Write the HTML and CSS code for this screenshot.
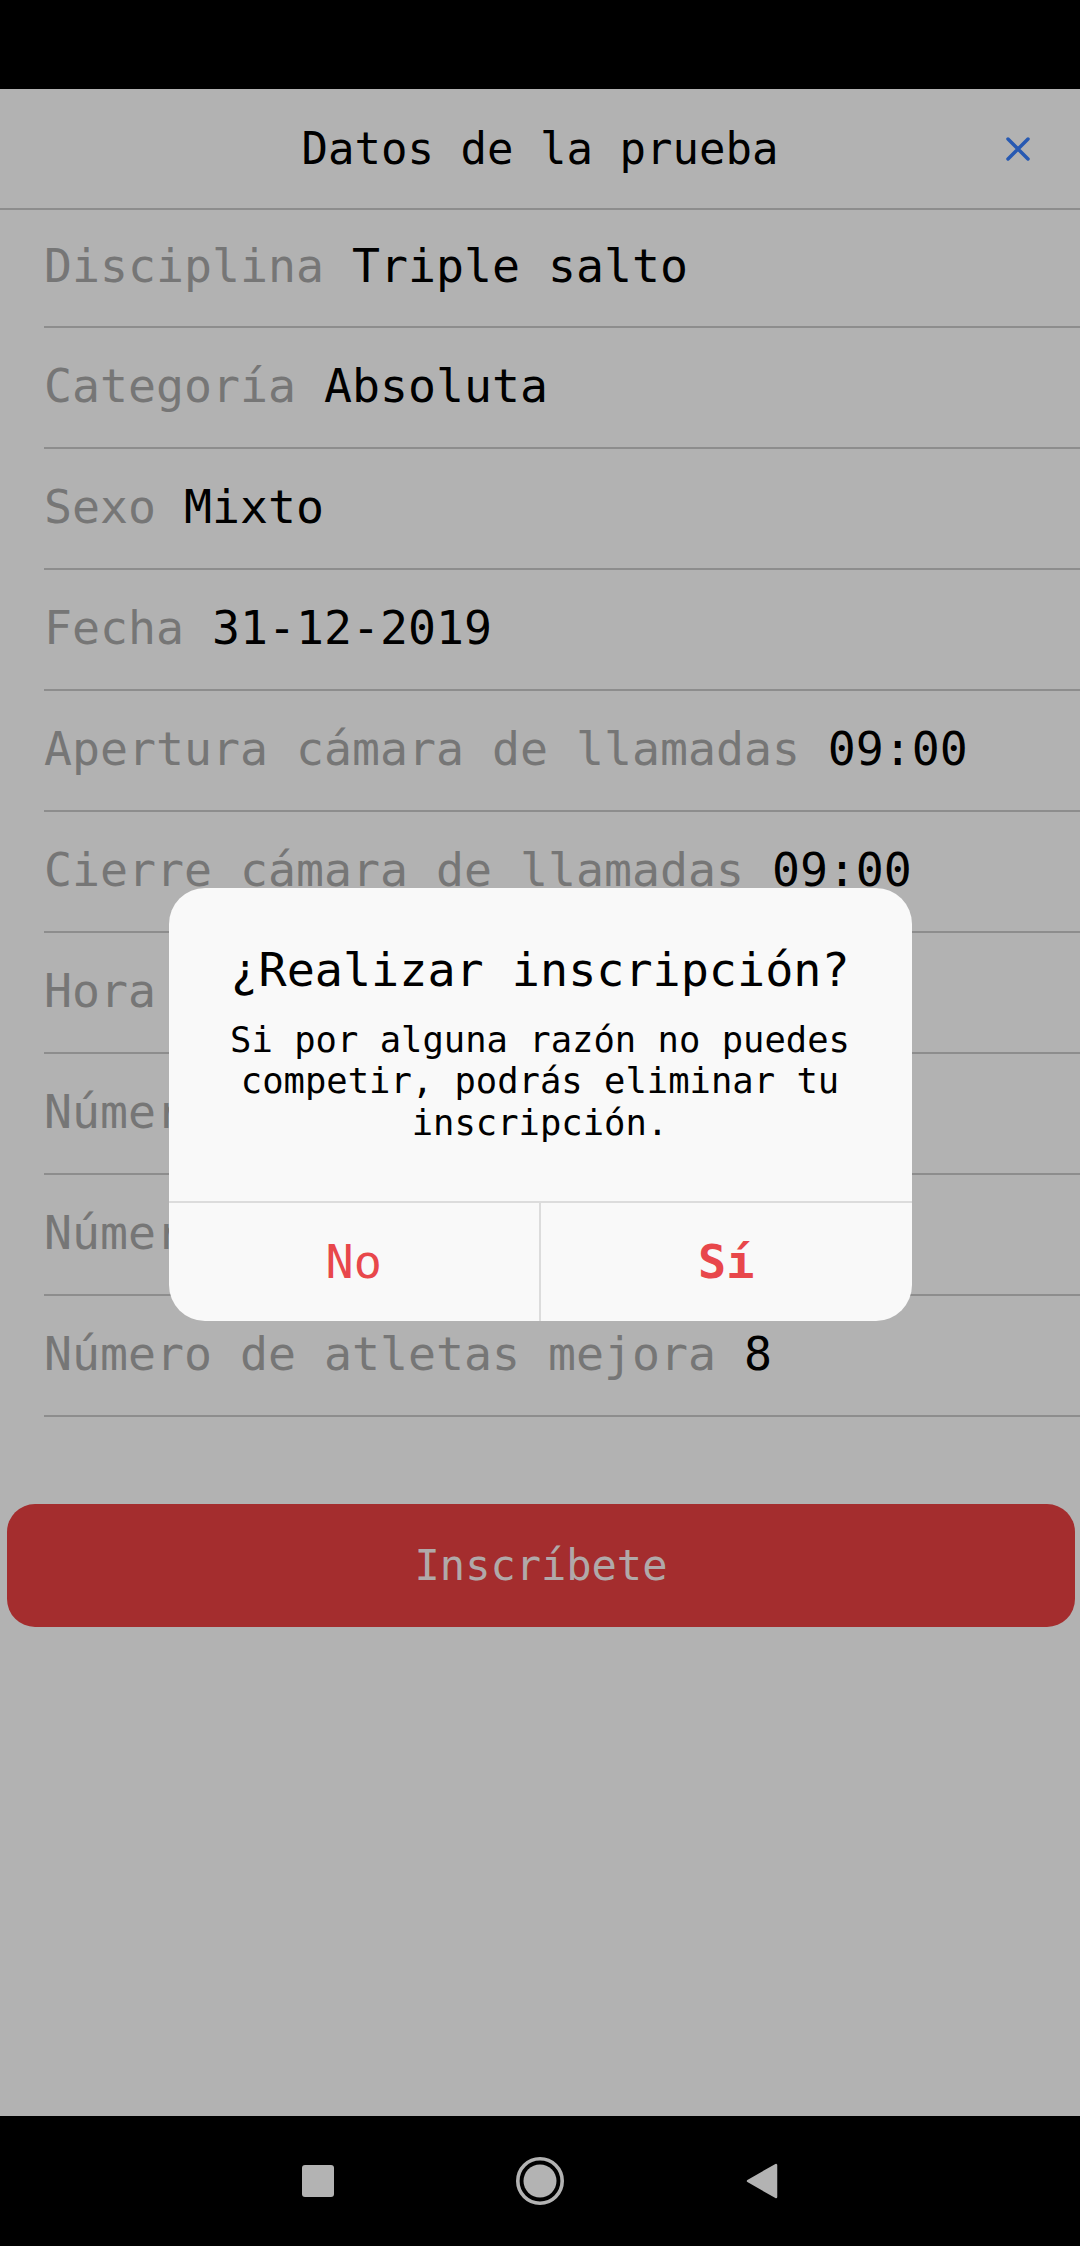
FILE: index.html
```html
<!DOCTYPE html>
<html lang="es">
<head>
<meta charset="utf-8">
<title>Datos de la prueba</title>
<link rel="stylesheet" href="styles.css">
</head>
<body>
<div class="status-bar"></div>
<div class="app">
  <header class="toolbar">
    <span class="toolbar-spacer"></span>
    <h1 class="toolbar-title">Datos de la prueba</h1>
    <button class="close-btn" aria-label="Cerrar">
      <svg width="24" height="24" viewBox="0 0 24 24"><path d="M2 2 L22 22 M22 2 L2 22" stroke="#3880ff" stroke-width="3.5" stroke-linecap="round" fill="none"/></svg>
    </button>
  </header>
  <ul class="details">
    <li class="detail"><span class="detail-text"><span class="detail-label">Disciplina</span> Triple salto</span></li>
    <li class="detail"><span class="detail-text"><span class="detail-label">Categoría</span> Absoluta</span></li>
    <li class="detail"><span class="detail-text"><span class="detail-label">Sexo</span> Mixto</span></li>
    <li class="detail"><span class="detail-text"><span class="detail-label">Fecha</span> 31-12-2019</span></li>
    <li class="detail"><span class="detail-text"><span class="detail-label">Apertura cámara de llamadas</span> 09:00</span></li>
    <li class="detail"><span class="detail-text"><span class="detail-label">Cierre cámara de llamadas</span> 09:00</span></li>
    <li class="detail"><span class="detail-text"><span class="detail-label">Hora</span> 09:30</span></li>
    <li class="detail"><span class="detail-text"><span class="detail-label">Número de intentos</span> 3</span></li>
    <li class="detail"><span class="detail-text"><span class="detail-label">Número de intentos mejora</span> 3</span></li>
    <li class="detail"><span class="detail-text"><span class="detail-label">Número de atletas mejora</span> 8</span></li>
  </ul>
  <div class="actions">
    <button class="primary-btn">Inscríbete</button>
  </div>
  <div class="backdrop">
    <div class="alert" role="dialog">
      <div class="alert-head"><h2 class="alert-title">¿Realizar inscripción?</h2></div>
      <p class="alert-message">Si por alguna razón no puedes competir, podrás eliminar tu inscripción.</p>
      <div class="alert-buttons">
        <button class="alert-btn">No</button>
        <button class="alert-btn alert-btn-strong">Sí</button>
      </div>
    </div>
  </div>
</div>
<nav class="nav-bar">
  <span class="nav-slot">
    <svg width="32" height="32" viewBox="0 0 32 32"><rect width="32" height="32" rx="3" fill="#b3b3b3"/></svg>
  </span>
  <span class="nav-slot">
    <svg width="48" height="48" viewBox="0 0 48 48"><circle cx="24" cy="24" r="22.2" fill="none" stroke="#b3b3b3" stroke-width="3.6"/><circle cx="24" cy="24" r="16.5" fill="#b3b3b3"/></svg>
  </span>
  <span class="nav-slot">
    <svg width="32" height="36" viewBox="0 0 32 36"><path d="M30 2 L30 34 L2 18 Z" fill="#b3b3b3" stroke="#b3b3b3" stroke-width="2.5" stroke-linejoin="round"/></svg>
  </span>
</nav>
</body>
</html>
```

FILE: styles.css
```css
* {
  box-sizing: border-box;
}

html, body {
  margin: 0;
  padding: 0;
}

body {
  width: 1080px;
  height: 2246px;
  background: #000;
  font-family: "DejaVu Sans Mono", monospace;
  color: #000;
  overflow: hidden;
}

button {
  font-family: inherit;
  border: 0;
  background: none;
  padding: 0;
  margin: 0;
  cursor: pointer;
}

.status-bar {
  height: 89px;
  background: #000;
}

.app {
  position: relative;
  height: 2027px;
  background: #fff;
  display: flex;
  flex-direction: column;
}

/* Toolbar */
.toolbar {
  height: 121px;
  flex: none;
  display: grid;
  grid-template-columns: 1fr auto 1fr;
  align-items: center;
  border-bottom: 2px solid #cbcbcb;
}

.toolbar-title {
  margin: 0;
  font-size: 44px;
  font-weight: normal;
  line-height: normal;
  white-space: nowrap;
}

.close-btn {
  justify-self: end;
  margin-right: 50px;
  width: 24px;
  height: 24px;
  display: flex;
}

/* Details list */
.details {
  list-style: none;
  margin: 0;
  padding: 0;
}

.detail {
  margin-left: 44px;
  height: 121px;
  padding-bottom: 4px;
  display: flex;
  align-items: center;
  border-bottom: 2px solid #cbcbcb;
  font-size: 46.5px;
  line-height: normal;
  white-space: nowrap;
}

.detail:first-child {
  height: 118px;
}

.detail-label {
  color: #aaa;
}

/* Main action */
.actions {
  margin-top: 87px;
  padding: 0 5px 0 7px;
}

.primary-btn {
  width: 100%;
  height: 123px;
  border-radius: 28px;
  background: #eb4142;
  color: rgba(255, 255, 255, 0.95);
  font-size: 42px;
}

/* Alert */
.backdrop {
  position: absolute;
  inset: 0;
  background: rgba(0, 0, 0, 0.3);
  display: flex;
  align-items: center;
  justify-content: center;
}

.alert {
  width: 743px;
  margin-top: 4px;
  background: #f9f9f9;
  border-radius: 36px;
  overflow: hidden;
  text-align: center;
}

.alert-head {
  padding: 55px 44px 22px;
}

.alert-title {
  margin: 0;
  font-size: 46.75px;
  font-weight: normal;
  line-height: normal;
}

.alert-message {
  margin: 0;
  padding: 0 44px 58px;
  font-size: 35.5px;
  line-height: 41.5px;
}

.alert-buttons {
  display: flex;
  border-top: 2px solid #dcdcdc;
}

.alert-btn {
  flex: 1;
  height: 118px;
  font-size: 46.75px;
  color: #e8474b;
}

.alert-btn + .alert-btn {
  border-left: 2px solid #dcdcdc;
}

.alert-btn-strong {
  font-weight: bold;
}

/* Navigation bar */
.nav-bar {
  height: 130px;
  background: #000;
  display: flex;
  align-items: center;
  justify-content: center;
}

.nav-slot {
  width: 222px;
  display: flex;
  justify-content: center;
  align-items: center;
}

.nav-slot svg {
  display: block;
}
```
